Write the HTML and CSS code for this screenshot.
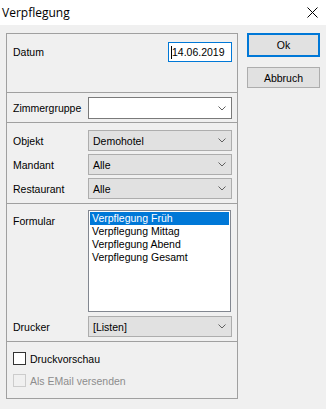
FILE: index.html
```html
<!DOCTYPE html>
<html lang="de">
<head>
    <meta charset="UTF-8">
    <title>Verpflegung</title>
    <link rel="stylesheet" href="styles.css">
</head>
<body>
    <div class="titlebar">
        <span class="title">Verpflegung</span>
        <svg class="close" width="11" height="11" viewBox="0 0 11 11">
            <path d="M0.5 0.5 L10.5 10.5 M10.5 0.5 L0.5 10.5" stroke="#000" stroke-width="1" fill="none"/>
        </svg>
    </div>

    <div class="dialog">
        <div class="frame">
            <div class="sec sec-datum">
                <span class="label">Datum</span>
                <div class="date-input"><span class="caret"></span>14.06.2019</div>
            </div>

            <div class="sec sec-zimmer">
                <div class="row">
                    <span class="label">Zimmergruppe</span>
                    <div class="combo combo-edit"><span></span><svg class="chev" width="8" height="5" viewBox="0 0 8 5"><path d="M0.5 0.5 L4 4 L7.5 0.5" stroke="#606060" fill="none"/></svg></div>
                </div>
            </div>

            <div class="sec sec-objekt">
                <div class="row">
                    <span class="label">Objekt</span>
                    <div class="combo"><span>Demohotel</span><svg class="chev" width="8" height="5" viewBox="0 0 8 5"><path d="M0.5 0.5 L4 4 L7.5 0.5" stroke="#606060" fill="none"/></svg></div>
                </div>
                <div class="row">
                    <span class="label">Mandant</span>
                    <div class="combo"><span>Alle</span><svg class="chev" width="8" height="5" viewBox="0 0 8 5"><path d="M0.5 0.5 L4 4 L7.5 0.5" stroke="#606060" fill="none"/></svg></div>
                </div>
                <div class="row">
                    <span class="label">Restaurant</span>
                    <div class="combo"><span>Alle</span><svg class="chev" width="8" height="5" viewBox="0 0 8 5"><path d="M0.5 0.5 L4 4 L7.5 0.5" stroke="#606060" fill="none"/></svg></div>
                </div>
            </div>

            <div class="sec sec-formular">
                <div class="row row-top">
                    <span class="label label-top">Formular</span>
                    <ul class="listbox">
                        <li class="selected">Verpflegung Früh</li>
                        <li>Verpflegung Mittag</li>
                        <li>Verpflegung Abend</li>
                        <li>Verpflegung Gesamt</li>
                    </ul>
                </div>
                <div class="row">
                    <span class="label">Drucker</span>
                    <div class="combo"><span>[Listen]</span><svg class="chev" width="8" height="5" viewBox="0 0 8 5"><path d="M0.5 0.5 L4 4 L7.5 0.5" stroke="#606060" fill="none"/></svg></div>
                </div>
            </div>

            <div class="sec sec-check">
                <label class="check"><span class="box"></span>Druckvorschau</label>
                <label class="check disabled"><span class="box"></span>Als EMail versenden</label>
            </div>
        </div>

        <div class="actions">
            <button class="btn btn-default">Ok</button>
            <button class="btn">Abbruch</button>
        </div>
    </div>
</body>
</html>
```

FILE: styles.css
```css
body {
    margin: 0;
    background: #f0f0f0;
    font-family: "Liberation Sans", Arial, sans-serif;
    font-size: 10.5px;
    color: #000;
}
.titlebar {
    height: 25px;
    background: #fff;
    display: flex;
    align-items: center;
    justify-content: space-between;
    padding: 0 8px 0 2px;
}
.title {
    font-family: "Open Sans", sans-serif;
    font-size: 12px;
}
.dialog {
    display: flex;
    align-items: flex-start;
    padding: 8px 0 0 6px;
}
.frame {
    width: 230px;
    height: 364px;
    border: 1px solid #a0a0a0;
}
.sec {
    padding: 0 5px 0 6px;
}
.sec + .sec {
    border-top: 1px solid #a0a0a0;
}
.sec-datum {
    height: 58px;
    padding-top: 8px;
    box-sizing: border-box;
    display: flex;
    justify-content: space-between;
    align-items: flex-start;
}
.sec-datum .label {
    line-height: 20px;
}
.date-input {
    width: 62px;
    height: 18px;
    border: 1px solid #0078d7;
    background: #fff;
    line-height: 18px;
    padding-left: 2px;
    display: flex;
    align-items: center;
    box-sizing: content-box;
    width: 60px;
}
.caret {
    width: 1px;
    height: 13px;
    background: #000;
    margin-right: 0;
}
.sec-zimmer {
    height: 30px;
    padding-top: 4px;
    box-sizing: border-box;
}
.sec-objekt {
    height: 81px;
    padding-top: 7px;
    box-sizing: border-box;
    display: flex;
    flex-direction: column;
    gap: 3px;
}
.sec-formular {
    height: 138px;
    padding-top: 6px;
    box-sizing: border-box;
    display: flex;
    flex-direction: column;
    gap: 4px;
}
.sec-check {
    height: 53px;
    padding-top: 10px;
    box-sizing: border-box;
    display: flex;
    flex-direction: column;
    gap: 9px;
}
.row {
    display: flex;
    align-items: center;
}
.row-top {
    align-items: flex-start;
}
.label {
    width: 75px;
    flex: none;
}
.label-top {
    padding-top: 5px;
}
.combo {
    width: 141px;
    height: 19px;
    border: 1px solid #adadad;
    background: #e1e1e1;
    display: flex;
    align-items: center;
    justify-content: space-between;
    padding: 0 5px 0 4px;
    box-sizing: content-box;
    width: 134px;
}
.combo-edit {
    height: 20px;
    background: #fff;
    border-color: #7a7a7a;
}
.chev {
    display: block;
}
.listbox {
    list-style: none;
    margin: 0;
    padding: 1px;
    width: 139px;
    height: 98px;
    border: 1px solid #828790;
    background: #fff;
}
.listbox li {
    height: 13px;
    line-height: 13px;
    padding-left: 2px;
}
.listbox .selected {
    background: #0078d7;
    color: #fff;
}
.check {
    display: flex;
    align-items: center;
    gap: 4px;
    height: 13px;
}
.box {
    width: 11px;
    height: 11px;
    border: 1px solid #333;
    background: #fff;
}
.check.disabled {
    color: #8d8d8d;
}
.check.disabled .box {
    border-color: #cccccc;
    background: #f0f0f0;
}
.actions {
    margin-left: 9px;
    width: 73px;
    display: flex;
    flex-direction: column;
}
.btn {
    font-family: "Liberation Sans", Arial, sans-serif;
    font-size: 10.5px;
    color: #000;
    background: #e1e1e1;
    border: 1px solid #adadad;
    height: 21px;
    padding: 0;
    margin-top: 10px;
}
.btn-default {
    border: 2px solid #0078d7;
    height: 24px;
    margin-top: 0;
}
```
